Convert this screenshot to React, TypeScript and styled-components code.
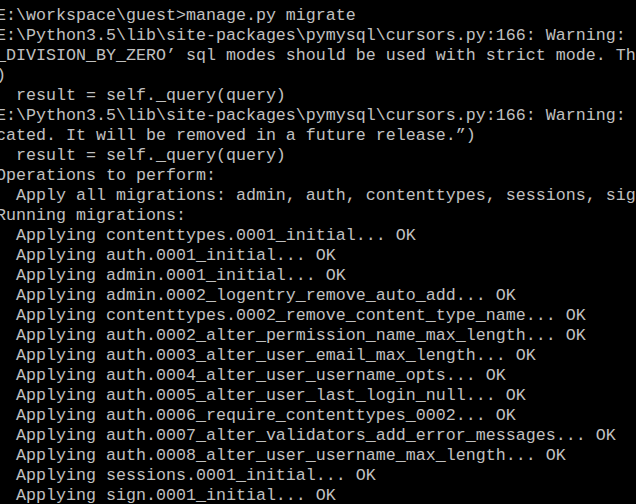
import React from "react";
import styled, { createGlobalStyle } from "styled-components";

const Global = createGlobalStyle`
  html, body {
    margin: 0;
    padding: 0;
    background: #000000;
    width: 636px;
    height: 504px;
    overflow: hidden;
  }
`;

const Screen = styled.div`
  width: 636px;
  height: 504px;
  background: #000000;
  padding-top: 6px;
  box-sizing: border-box;
  overflow: hidden;
`;

const Output = styled.div`
  margin-left: -4px;
  display: flex;
  flex-direction: column;
`;

const Line = styled.div`
  font-family: "Liberation Mono", "DejaVu Sans Mono", monospace;
  font-size: 16.67px;
  line-height: 20px;
  height: 20px;
  flex: none;
  color: #c0c0c0;
  white-space: pre;
`;

const lines: string[] = [
  "E:\\workspace\\guest>manage.py migrate",
  "E:\\Python3.5\\lib\\site-packages\\pymysql\\cursors.py:166: Warning: (1231, \"'NO_ZERO_DATE', 'NO_ZERO_IN_DATE' and 'ERROR_FOR",
  "_DIVISION_BY_ZERO’ sql modes should be used with strict mode. They will be merged with strict mode in a future release",
  ")",
  "  result = self._query(query)",
  "E:\\Python3.5\\lib\\site-packages\\pymysql\\cursors.py:166: Warning: (1287, \"'@@tx_isolation' is deprecated and will be depre",
  "cated. It will be removed in a future release.”)",
  "  result = self._query(query)",
  "Operations to perform:",
  "  Apply all migrations: admin, auth, contenttypes, sessions, sign",
  "Running migrations:",
  "  Applying contenttypes.0001_initial... OK",
  "  Applying auth.0001_initial... OK",
  "  Applying admin.0001_initial... OK",
  "  Applying admin.0002_logentry_remove_auto_add... OK",
  "  Applying contenttypes.0002_remove_content_type_name... OK",
  "  Applying auth.0002_alter_permission_name_max_length... OK",
  "  Applying auth.0003_alter_user_email_max_length... OK",
  "  Applying auth.0004_alter_user_username_opts... OK",
  "  Applying auth.0005_alter_user_last_login_null... OK",
  "  Applying auth.0006_require_contenttypes_0002... OK",
  "  Applying auth.0007_alter_validators_add_error_messages... OK",
  "  Applying auth.0008_alter_user_username_max_length... OK",
  "  Applying sessions.0001_initial... OK",
  "  Applying sign.0001_initial... OK",
];

export default function App() {
  return (
    <>
      <Global />
      <Screen>
        <Output>
          {lines.map((l, i) => (
            <Line key={i}>{l}</Line>
          ))}
        </Output>
      </Screen>
    </>
  );
}
